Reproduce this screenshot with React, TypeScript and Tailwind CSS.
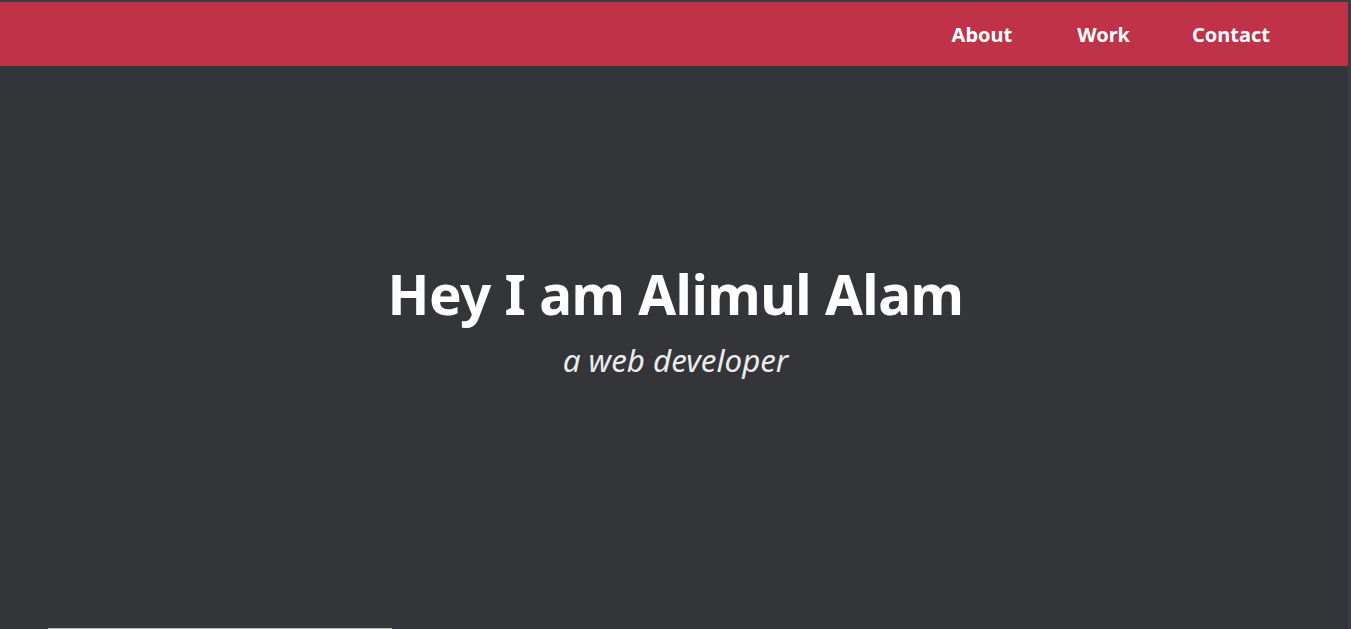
import React from "react";

export default function App() {
  return (
    <div
      className="w-[1351px] h-[629px] overflow-hidden bg-[#333539] flex flex-col relative"
      style={{ fontFamily: '"Noto Sans", "Open Sans", sans-serif' }}
    >
      <div className="h-[2px] bg-[#3d3d3f] shrink-0" />
      <nav className="h-[64px] shrink-0 bg-[#bf3247] flex items-center justify-end pr-[81px]">
        <a className="text-white font-bold text-[20px] leading-[28px] mt-[2px]">About</a>
        <a className="text-white font-bold text-[20px] leading-[28px] mt-[2px] ml-[65px]">Work</a>
        <a className="text-white font-bold text-[20px] leading-[28px] mt-[2px] ml-[62px]">Contact</a>
      </nav>
      <main className="flex-1 flex flex-col items-center pt-[196px]">
        <h1 className="text-white font-bold text-[54.8px] leading-[64px] tracking-[-0.5px]">Hey I am Alimul Alam</h1>
        <p className="text-[#ececec] italic text-[31.3px] leading-[42px] mt-[13px]">a web developer</p>
      </main>
      <div className="absolute bottom-0 left-[48px] w-[344px] h-px bg-[#bdbdbd]" />
      <div className="absolute top-[2px] right-0 w-[3px] h-[627px] bg-[#3b3d42]" />
    </div>
  );
}
